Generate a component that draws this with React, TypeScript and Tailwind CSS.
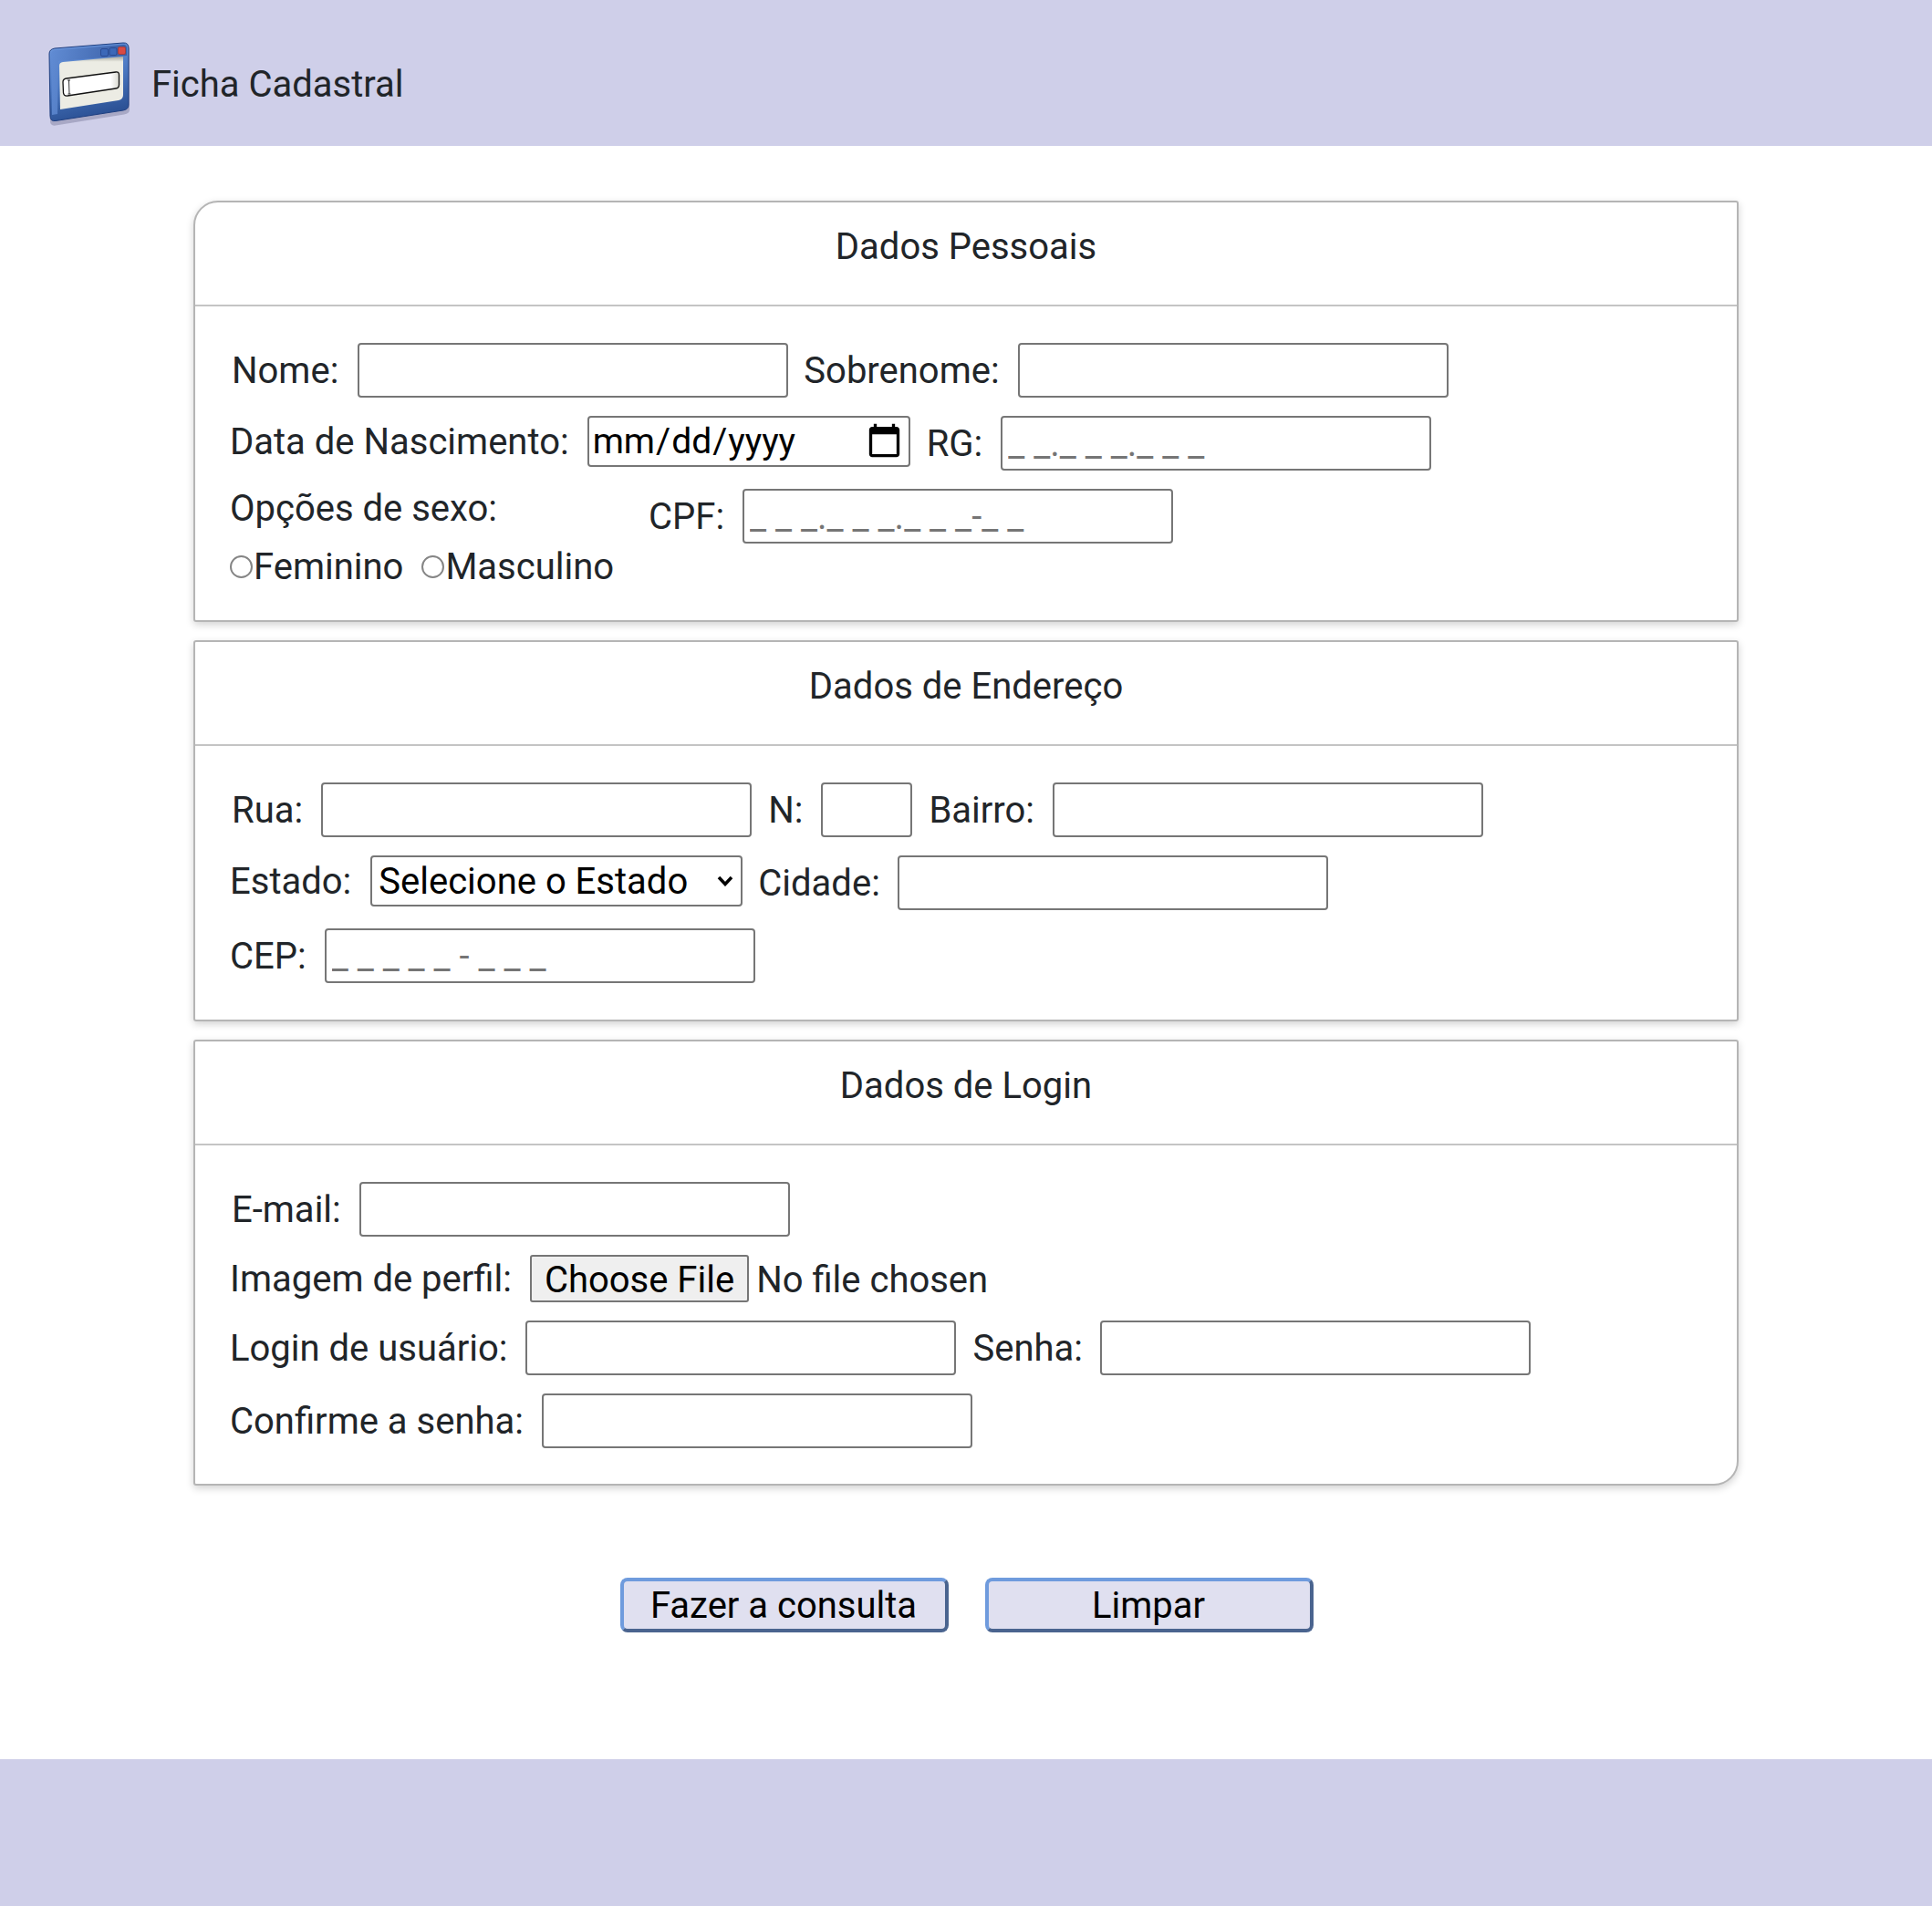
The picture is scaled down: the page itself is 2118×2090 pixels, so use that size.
import React from "react";

const inputCls =
  "h-[60px] w-[472px] shrink-0 rounded-[4px] border-2 border-[#767676] bg-white px-[6px] text-black placeholder:text-[#757575]";

function Logo() {
  return (
    <svg width="120" height="110" viewBox="0 0 120 110" className="shrink-0">
      <defs>
        <linearGradient id="frame" x1="0" y1="0" x2="0.25" y2="1">
          <stop offset="0" stopColor="#6f9ae0" />
          <stop offset="0.55" stopColor="#4a77c0" />
          <stop offset="1" stopColor="#2c5296" />
        </linearGradient>
        <linearGradient id="bar" x1="0" y1="0" x2="1" y2="0">
          <stop offset="0" stopColor="#5f8ad2" />
          <stop offset="1" stopColor="#34589f" />
        </linearGradient>
        <linearGradient id="paper" x1="0" y1="0" x2="0" y2="1">
          <stop offset="0" stopColor="#a9a99f" />
          <stop offset="0.1" stopColor="#ecece4" />
          <stop offset="1" stopColor="#ecece4" />
        </linearGradient>
        <linearGradient id="field" x1="0" y1="0" x2="1" y2="0">
          <stop offset="0" stopColor="#ffffff" />
          <stop offset="0.85" stopColor="#ffffff" />
          <stop offset="1" stopColor="#d8d8d0" />
        </linearGradient>
      </defs>
      <path d="M20 19 L96 12 Q102 12 102 18 L102 84 Q102 88 96 89 L21 101 Q15 102 15 96 L14 25 Q14 20 20 19 Z" fill="#77779a" opacity="0.45" transform="translate(0 1.5)" />
      <path d="M20 18 L95 12 Q101 11.500 101 18 L101 80 Q101 85 95 86 L21 97.500 Q15 98.500 15 92 L14 24 Q14 19 20 18 Z" fill="url(#frame)" stroke="#1f3f80" strokeWidth="1" />
      <path d="M16 24 Q16 20.500 20 20 L95 14 Q99 13.500 99 18 L99 26 L24 32 L23 90 L17 91 Z" fill="url(#bar)" opacity="0.85" />
      <path d="M29 33 L95 27 L95 69 Q95 74 90 75 L26 85 L25 37 Q25 33.500 29 33 Z" fill="url(#paper)" />
      <rect x="70.500" y="18.500" width="8" height="8" rx="1.500" fill="#3c68b8" stroke="#24448c" strokeWidth="0.8" />
      <rect x="80" y="17.500" width="8" height="8" rx="1.500" fill="#3c68b8" stroke="#24448c" strokeWidth="0.8" />
      <rect x="89.500" y="16.500" width="8" height="8" rx="1.500" fill="#d94a43" stroke="#a83832" strokeWidth="0.8" />
      <path d="M33 51 L87 44 Q90.500 43.500 90.500 47 L90.500 58 Q90.500 61.500 87 62 L34 70 Q30 70.500 29.500 67 L29 55 Q29 51.500 33 51 Z" fill="url(#field)" stroke="#111111" strokeWidth="1.300" />
      <path d="M34 53 L37 53 M35.500 53 L36 68 M34.500 68 L37.500 68" stroke="#333333" strokeWidth="1" fill="none" />
    </svg>
  );
}

function Label({ children, className = "" }: { children: React.ReactNode; className?: string }) {
  return <label className={`shrink-0 whitespace-nowrap pt-[2px] ${className}`}>{children}</label>;
}

function Radio({ className = "" }: { className?: string }) {
  return (
    <input
      type="radio"
      name="sexo"
      className={`m-0 h-[25px] w-[25px] shrink-0 appearance-none rounded-full border-2 border-[#858585] bg-white ${className}`}
    />
  );
}

function Card({
  title,
  className,
  children,
}: {
  title: string;
  className: string;
  children: React.ReactNode;
}) {
  return (
    <section className={`border-2 border-[#b5b5b5] bg-white shadow-[0_3px_8px_rgba(0,0,0,0.18)] ${className}`}>
      <div className="flex h-[114px] items-start justify-center border-b-2 border-[#c4c4c4] pt-[17px]">
        <h2 className="leading-[64px]">{title}</h2>
      </div>
      <div className="flex flex-col pl-[38px] pt-[40px]">{children}</div>
    </section>
  );
}

export default function App() {
  return (
    <div
      className="flex min-h-[2090px] flex-col bg-white text-[40px] leading-[48px] text-[#212529]"
      style={{ fontFamily: "Roboto, sans-serif" }}
    >
      <header className="flex h-[160px] items-start bg-[#cfcfe9]">
        <div className="ml-[40px] mt-[35px] h-[110px]">
          <Logo />
        </div>
        <span className="ml-[6px] mt-[69px]">Ficha Cadastral</span>
      </header>

      <main className="mx-[212px] mt-[60px] flex flex-col">
        <Card title="Dados Pessoais" className="h-[462px] rounded-[3px] rounded-tl-[27px]">
          <div className="flex h-[60px] items-center">
            <Label className="ml-[2px] mr-[21px]">Nome:</Label>
            <input className={inputCls} />
            <Label className="ml-[17px] mr-[20px]">Sobrenome:</Label>
            <input className={inputCls} />
          </div>
          <div className="mt-[20px] flex h-[60px] items-start">
            <Label className="mr-[20px] mt-[3px]">Data de Nascimento:</Label>
            <input
              type="date"
              className="h-[56px] w-[354px] shrink-0 rounded-[4px] border-2 border-[#767676] bg-white pl-[3px] pr-[5px] text-[39px] text-black [&::-webkit-calendar-picker-indicator]:h-[43px] [&::-webkit-calendar-picker-indicator]:w-[43px] [&::-webkit-calendar-picker-indicator]:p-0"
            />
            <Label className="ml-[18px] mr-[20px] mt-[5px]">RG:</Label>
            <input className={inputCls} placeholder="_ _._ _ _._ _ _" />
          </div>
          <div className="mt-[20px] flex items-start">
            <div className="flex w-[459px] shrink-0 flex-col">
              <Label className="-mt-[4px]">Opções de sexo:</Label>
              <div className="mt-[14px] flex items-center">
                <Radio />
                <Label className="ml-[1px]">Feminino</Label>
                <Radio className="ml-[20px]" />
                <Label className="ml-[1px]">Masculino</Label>
              </div>
            </div>
            <div className="flex h-[60px] items-center">
              <Label className="mr-[20px]">CPF:</Label>
              <input className={inputCls} placeholder="_ _ _._ _ _._ _ _-_ _" />
            </div>
          </div>
        </Card>

        <Card title="Dados de Endereço" className="mt-[20px] h-[418px] rounded-[3px]">
          <div className="flex h-[60px] items-center">
            <Label className="ml-[2px] mr-[20px]">Rua:</Label>
            <input className={inputCls} />
            <Label className="ml-[18px] mr-[20px]">N:</Label>
            <input className="h-[60px] w-[100px] shrink-0 rounded-[4px] border-2 border-[#767676] bg-white px-[5px]" />
            <Label className="ml-[18px] mr-[20px]">Bairro:</Label>
            <input className={inputCls} />
          </div>
          <div className="mt-[20px] flex h-[60px] items-start">
            <Label className="mr-[21px] mt-[3px]">Estado:</Label>
            <div className="relative h-[56px] w-[408px] shrink-0">
              <select className="h-full w-full appearance-none rounded-[4px] border-2 border-[#767676] bg-white pl-[7px] pt-[2px] text-black">
                <option>Selecione o Estado</option>
              </select>
              <svg
                width="18"
                height="12"
                viewBox="0 0 18 12"
                className="pointer-events-none absolute right-[10px] top-[22px]"
              >
                <path d="M2 2 L9 9.500 L16 2" fill="none" stroke="#000000" strokeWidth="3.500" />
              </svg>
            </div>
            <Label className="ml-[17px] mr-[19px] mt-[5px]">Cidade:</Label>
            <input className={inputCls} />
          </div>
          <div className="mt-[20px] flex h-[60px] items-center">
            <Label className="mr-[20px]">CEP:</Label>
            <input className={inputCls} placeholder="_ _ _ _ _ - _ _ _" />
          </div>
        </Card>

        <Card title="Dados de Login" className="mt-[20px] h-[489px] rounded-[3px] rounded-br-[27px]">
          <div className="flex h-[60px] items-center">
            <Label className="ml-[2px] mr-[20px]">E-mail:</Label>
            <input className={inputCls} />
          </div>
          <div className="mt-[20px] flex h-[52px] items-center">
            <Label className="mr-[20px]">Imagem de perfil:</Label>
            <input
              type="file"
              className="w-[800px] file:mr-[8px] file:h-[52px] file:rounded-[3px] file:border-2 file:border-solid file:border-[#767676] file:bg-[#efefef] file:px-[14px] file:pt-[2px] file:text-black"
            />
          </div>
          <div className="mt-[20px] flex h-[60px] items-center">
            <Label className="mr-[19px]">Login de usuário:</Label>
            <input className={inputCls} />
            <Label className="ml-[19px] mr-[19px]">Senha:</Label>
            <input className={inputCls} />
          </div>
          <div className="mt-[20px] flex h-[60px] items-center">
            <Label className="mr-[20px]">Confirme a senha:</Label>
            <input className={inputCls} />
          </div>
        </Card>

        <div className="mt-[101px] flex justify-center gap-[40px] pl-[2px]">
          <button className="h-[60px] w-[360px] rounded-[8px] border-4 border-b-[#4a648f] border-l-[#6f9bdd] border-r-[#4a648f] border-t-[#6f9bdd] bg-[#e0e0f0] pr-[2px] pt-[2px] text-black">
            Fazer a consulta
          </button>
          <button className="h-[60px] w-[360px] rounded-[8px] border-4 border-b-[#4a648f] border-l-[#6f9bdd] border-r-[#4a648f] border-t-[#6f9bdd] bg-[#e0e0f0] pr-[2px] pt-[2px] text-black">
            Limpar
          </button>
        </div>
      </main>

      <footer className="mt-auto h-[161px] bg-[#cfcfe9]" />
    </div>
  );
}
